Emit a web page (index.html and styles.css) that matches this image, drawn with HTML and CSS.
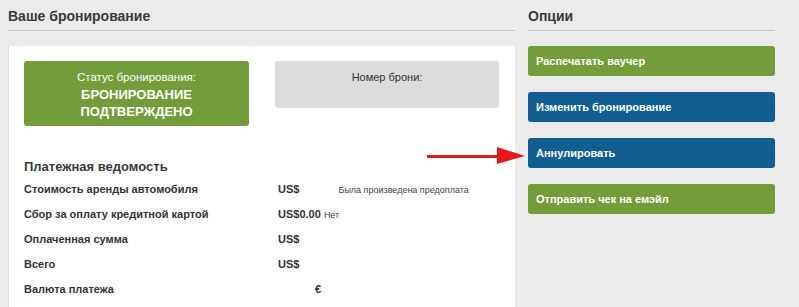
FILE: index.html
```html
<!DOCTYPE html>
<html lang="ru">
<head>
    <meta charset="utf-8" />
    <link rel="stylesheet" href="styles.css">
</head>
<body>
    <div class="page">
        <div class="main">
            <h2 class="title">Ваше бронирование</h2>
            <div class="panel">
                <div class="status-row">
                    <div class="status">
                        <div class="status-label">Статус бронирования:</div>
                        <div class="status-value">БРОНИРОВАНИЕ<br />ПОДТВЕРЖДЕНО</div>
                    </div>
                    <div class="number">Номер брони:</div>
                </div>

                <h3 class="pay-title">Платежная ведомость</h3>
                <table class="pay">
                    <tr>
                        <td class="name">Стоимость аренды автомобиля</td>
                        <td class="val">US$ <span class="note first">Была произведена предоплата</span></td>
                    </tr>
                    <tr>
                        <td class="name">Сбор за оплату кредитной картой</td>
                        <td class="val">US$0.00 <span class="note">Нет</span></td>
                    </tr>
                    <tr>
                        <td class="name">Оплаченная сумма</td>
                        <td class="val">US$</td>
                    </tr>
                    <tr>
                        <td class="name">Всего</td>
                        <td class="val">US$</td>
                    </tr>
                    <tr>
                        <td class="name">Валюта платежа</td>
                        <td class="val"><span class="cur">€</span></td>
                    </tr>
                </table>
            </div>
        </div>

        <div class="side">
            <h2 class="title">Опции</h2>
            <div class="btn green">Распечатать ваучер</div>
            <div class="btn blue">Изменить бронирование</div>
            <div class="btn blue">Аннулировать</div>
            <div class="btn green">Отправить чек на емэйл</div>
        </div>

        <!-- red pointer drawn over the page -->
        <svg class="arrow" width="100" height="20" viewBox="0 0 100 20">
            <rect x="0" y="9" width="72" height="3" fill="#e3191c" />
            <polygon points="70,1 98,10 70,18" fill="#e3191c" />
        </svg>
    </div>
</body>
</html>
```

FILE: styles.css
```css
html, body {
    margin: 0;
    padding: 0;
    background: #ebebeb;
}

body {
    font-family: "Liberation Sans", Arial, sans-serif;
    color: #333;
}

.page {
    position: relative;
    display: flex;
    gap: 13px;
    padding: 0 8px;
    height: 307px;
    overflow: hidden;
}

.main {
    width: 507px;
}

.side {
    width: 247px;
}

.title {
    margin: 0 0 15px 0;
    padding-top: 8px;
    height: 22px;
    font-size: 14px;
    font-weight: bold;
    color: #3a3a3a;
    border-bottom: 1px solid #c6c6c6;
}

.panel {
    background: #fff;
    border-left: 1px solid #dedede;
    padding: 15px 15px 20px 15px;
    height: 300px;
}

.status-row {
    display: flex;
    gap: 26px;
    align-items: flex-start;
}

.status {
    width: 225px;
    height: 65px;
    background: #739d3a;
    border-radius: 3px;
    color: #fff;
    text-align: center;
    box-sizing: border-box;
    padding-top: 9px;
}

.status-label {
    font-size: 11.5px;
    line-height: 15px;
}

.status-value {
    font-size: 13px;
    font-weight: bold;
    line-height: 17px;
    margin-top: 1px;
}

.number {
    width: 224px;
    height: 47px;
    background: #dcdcdc;
    border-radius: 3px;
    text-align: center;
    font-size: 11px;
    box-sizing: border-box;
    padding-top: 10px;
    color: #333;
}

.pay-title {
    margin: 33px 0 2px 0;
    font-size: 13px;
    font-weight: bold;
    color: #3a3a3a;
}

.pay {
    border-collapse: collapse;
}

.pay td {
    padding: 0;
    height: 25px;
    font-size: 11px;
    font-weight: bold;
    color: #333;
    white-space: nowrap;
}

.pay td.name {
    width: 254px;
}

.note {
    font-size: 9px;
    font-weight: normal;
    color: #444;
}

.note.first {
    margin-left: 36px;
}

.cur {
    margin-left: 37px;
}

.btn {
    height: 30px;
    line-height: 30px;
    padding-left: 8px;
    margin-bottom: 16px;
    border-radius: 3px;
    color: #fff;
    font-size: 11px;
    font-weight: bold;
}

.green {
    background: #739d3a;
}

.blue {
    background: #125e91;
}

.arrow {
    position: absolute;
    left: 427px;
    top: 146px;
}
```
